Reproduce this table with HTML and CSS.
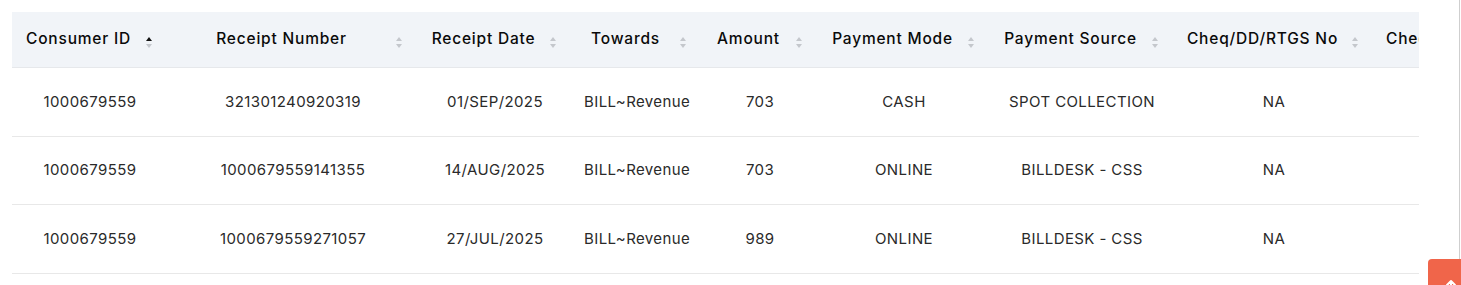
FILE: index.html
```html
<!DOCTYPE html>
<html lang="en">
<head>
<meta charset="utf-8">
<title>Receipts</title>
<link rel="stylesheet" href="styles.css">
</head>
<body>
<div class="page">
  <div class="table-scroll">
    <table class="receipts">
      <colgroup>
        <col class="c1"><col class="c2"><col class="c3"><col class="c4"><col class="c5"><col class="c6"><col class="c7"><col class="c8"><col class="c9">
      </colgroup>
      <thead>
        <tr>
          <th><div class="th-inner"><span class="title">Consumer ID</span><span class="sorter asc"><i class="up"></i><i class="down"></i></span></div></th>
          <th><div class="th-inner"><span class="title">Receipt Number</span><span class="sorter"><i class="up"></i><i class="down"></i></span></div></th>
          <th><div class="th-inner"><span class="title">Receipt Date</span><span class="sorter"><i class="up"></i><i class="down"></i></span></div></th>
          <th><div class="th-inner"><span class="title">Towards</span><span class="sorter"><i class="up"></i><i class="down"></i></span></div></th>
          <th><div class="th-inner"><span class="title">Amount</span><span class="sorter"><i class="up"></i><i class="down"></i></span></div></th>
          <th><div class="th-inner"><span class="title">Payment Mode</span><span class="sorter"><i class="up"></i><i class="down"></i></span></div></th>
          <th><div class="th-inner"><span class="title">Payment Source</span><span class="sorter"><i class="up"></i><i class="down"></i></span></div></th>
          <th><div class="th-inner"><span class="title">Cheq/DD/RTGS No</span><span class="sorter"><i class="up"></i><i class="down"></i></span></div></th>
          <th class="left"><div class="th-inner"><span class="title">Cheque Date</span><span class="sorter"><i class="up"></i><i class="down"></i></span></div></th>
        </tr>
      </thead>
      <tbody>
        <tr>
          <td>1000679559</td><td>321301240920319</td><td>01/SEP/2025</td><td class="towards">BILL~Revenue</td><td>703</td><td>CASH</td><td>SPOT COLLECTION</td><td>NA</td><td></td>
        </tr>
        <tr>
          <td>1000679559</td><td>1000679559141355</td><td>14/AUG/2025</td><td class="towards">BILL~Revenue</td><td>703</td><td>ONLINE</td><td>BILLDESK - CSS</td><td>NA</td><td></td>
        </tr>
        <tr>
          <td>1000679559</td><td>1000679559271057</td><td>27/JUL/2025</td><td class="towards">BILL~Revenue</td><td>989</td><td>ONLINE</td><td>BILLDESK - CSS</td><td>NA</td><td></td>
        </tr>
      </tbody>
    </table>
  </div>
</div>
<div class="scroll-edge"></div>
<button class="to-top" aria-label="Back to top">
  <svg width="12" height="12" viewBox="0 0 12 12"><path d="M6 11V2M2 6l4-4 4 4" fill="none" stroke="#fff" stroke-width="2" stroke-linecap="round" stroke-linejoin="round"/></svg>
</button>
</body>
</html>
```
FILE: styles.css
```css
html, body {
  margin: 0;
  padding: 0;
  background: #fff;
  overflow: hidden;
}
body {
  font-family: Inter, "Open Sans", sans-serif;
  color: #2a2a2a;
}
.page {
  padding: 12px 0 0 12px;
}
.table-scroll {
  width: 1407px;
  overflow: hidden;
}
.receipts {
  border-collapse: collapse;
  table-layout: fixed;
  width: 1560px;
}
.c1 { width: 156px; }
.c2 { width: 250px; }
.c3 { width: 154px; }
.c4 { width: 130px; }
.c5 { width: 116px; }
.c6 { width: 172px; }
.c7 { width: 184px; }
.c8 { width: 200px; }
.c9 { width: 198px; }

.receipts th {
  background: #f1f4f8;
  height: 53px;
  padding: 0 15px 2px 12px;
  border-bottom: 1px solid #e6e8eb;
  font-weight: 500;
  font-size: 15.5px;
  letter-spacing: 0.8px;
  color: #0a0a0a;
  white-space: nowrap;
}
.receipts th.left .title { text-align: left; }
.th-inner {
  display: flex;
  align-items: center;
}
.title {
  flex: 1;
  min-width: 0;
  text-align: center;
  white-space: nowrap;
}
.sorter {
  flex: 0 0 8px;
  margin-left: 12px;
  display: flex;
  flex-direction: column;
  align-items: center;
  gap: 3px;
  padding-top: 7px;
}
.sorter i {
  display: block;
  width: 0;
  height: 0;
  border-left: 3.5px solid transparent;
  border-right: 3.5px solid transparent;
}
.sorter .up { border-bottom: 4px solid #c4c7cc; }
.sorter .down { border-top: 4px solid #c4c7cc; }
.sorter.asc .up { border-bottom-color: #111; }

.receipts td {
  height: 66.5px;
  padding: 0 16px 1px;
  text-align: center;
  font-size: 15px;
  letter-spacing: 0.4px;
  color: #2a2a2a;
  border-bottom: 1px solid #e8e8e8;
  white-space: nowrap;
}
.receipts td.towards {
  padding-left: 12px;
}
.scroll-edge {
  position: fixed;
  top: 0;
  bottom: 0;
  left: 1459px;
  width: 1px;
  background: #cfcfcf;
}
.to-top {
  position: fixed;
  left: 1428px;
  top: 259px;
  width: 40px;
  height: 40px;
  border: none;
  border-radius: 4px;
  background: #f0654a;
  padding: 20px 0 0 17px;
  display: flex;
  align-items: flex-start;
  cursor: pointer;
}
```
